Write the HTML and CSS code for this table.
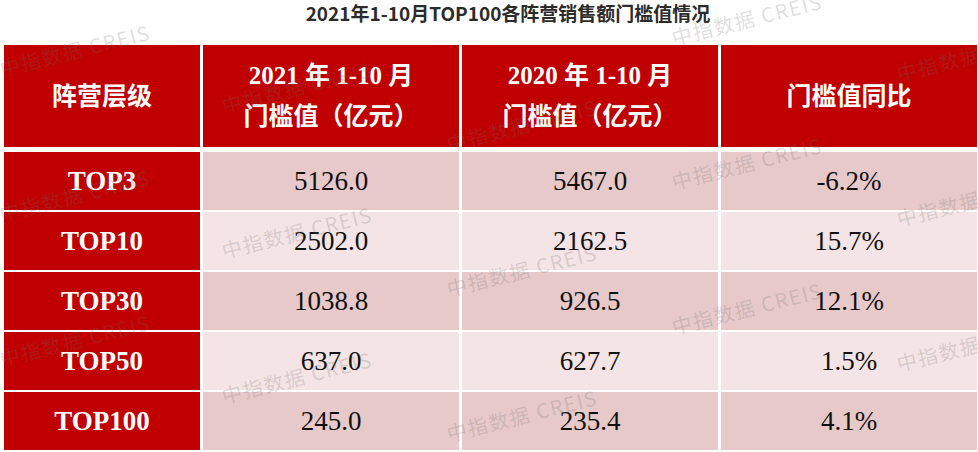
FILE: index.html
```html
<!DOCTYPE html>
<html lang="zh">
<head>
<meta charset="utf-8">
<link rel="stylesheet" href="styles.css">
</head>
<body>
<div class="page">
  <h1 class="title">2021年1-10月TOP100各阵营销售额门槛值情况</h1>
  <div class="table">
    <div class="th">阵营层级</div>
    <div class="th two"><span>2021 年 1-10 月</span><span>门槛值（亿元）</span></div>
    <div class="th two"><span>2020 年 1-10 月</span><span>门槛值（亿元）</span></div>
    <div class="th">门槛值同比</div>

    <div class="tier">TOP3</div><div class="td odd">5126.0</div><div class="td odd">5467.0</div><div class="td odd">-6.2%</div>
    <div class="tier">TOP10</div><div class="td even">2502.0</div><div class="td even">2162.5</div><div class="td even">15.7%</div>
    <div class="tier">TOP30</div><div class="td odd">1038.8</div><div class="td odd">926.5</div><div class="td odd">12.1%</div>
    <div class="tier">TOP50</div><div class="td even">637.0</div><div class="td even">627.7</div><div class="td even">1.5%</div>
    <div class="tier">TOP100</div><div class="td odd">245.0</div><div class="td odd">235.4</div><div class="td odd">4.1%</div>
  </div>
  <div class="wm-layer" aria-hidden="true">
    <span class="wm" style="left:0px;top:69px">中指数据 CREIS</span>
    <span class="wm" style="left:0px;top:214px">中指数据 CREIS</span>
    <span class="wm" style="left:0px;top:359px">中指数据 CREIS</span>
    <span class="wm" style="left:222px;top:106px">中指数据 CREIS</span>
    <span class="wm" style="left:222px;top:251px">中指数据 CREIS</span>
    <span class="wm" style="left:222px;top:396px">中指数据 CREIS</span>
    <span class="wm" style="left:447px;top:144px">中指数据 CREIS</span>
    <span class="wm" style="left:447px;top:289px">中指数据 CREIS</span>
    <span class="wm" style="left:447px;top:434px">中指数据 CREIS</span>
    <span class="wm" style="left:672px;top:38px">中指数据 CREIS</span>
    <span class="wm" style="left:672px;top:182px">中指数据 CREIS</span>
    <span class="wm" style="left:672px;top:327px">中指数据 CREIS</span>
    <span class="wm" style="left:897px;top:74px">中指数据 CREIS</span>
    <span class="wm" style="left:897px;top:219px">中指数据 CREIS</span>
    <span class="wm" style="left:897px;top:364px">中指数据 CREIS</span>
  </div>
</div>
</body>
</html>
```

FILE: styles.css
```css
html, body {
  margin: 0;
  padding: 0;
  background: #ffffff;
}

.page {
  position: relative;
  width: 978px;
  height: 452px;
  overflow: hidden;
  padding: 0 0 0 4px;
  box-sizing: border-box;
}

.title {
  margin: 0 0 20px 0;
  height: 25px;
  line-height: 25px;
  padding-left: 34px;
  text-align: center;
  font-family: "Noto Sans CJK SC", "Noto Sans", sans-serif;
  font-weight: 700;
  font-size: 19px;
  color: #2b2b2b;
}

.table {
  display: grid;
  grid-template-columns: 196px 256px 256px 256px;
  grid-template-rows: 105px repeat(5, 58px);
  column-gap: 3px;
  row-gap: 2px;
}

.th {
  margin-bottom: 3px;
  background: #c00000;
  color: #ffffff;
  display: flex;
  flex-direction: column;
  align-items: center;
  justify-content: center;
  font-family: "Liberation Serif", "Noto Sans CJK SC", serif;
  font-weight: 700;
  font-size: 25px;
  line-height: 41px;
}

.th.two span {
  display: block;
  white-space: pre;
}

.tier {
  background: #c00000;
  color: #ffffff;
  display: flex;
  align-items: center;
  justify-content: center;
  font-family: "Liberation Serif", serif;
  font-weight: 700;
  font-size: 27px;
}

.td {
  display: flex;
  align-items: center;
  justify-content: center;
  font-family: "Liberation Serif", serif;
  font-size: 27px;
  color: #111111;
}

.td.odd {
  background: #e7c9ca;
}

.td.even {
  background: #f4e4e5;
}

.wm-layer {
  position: absolute;
  inset: 0;
  pointer-events: none;
}

.wm {
  position: absolute;
  height: 24px;
  line-height: 24px;
  margin-top: -12px;
  white-space: pre;
  font-family: "Noto Sans CJK SC", "Noto Sans", sans-serif;
  font-size: 20px;
  letter-spacing: 1.5px;
  color: rgba(110, 110, 110, 0.22);
  transform: rotate(-14deg);
  transform-origin: 0 50%;
}
```
